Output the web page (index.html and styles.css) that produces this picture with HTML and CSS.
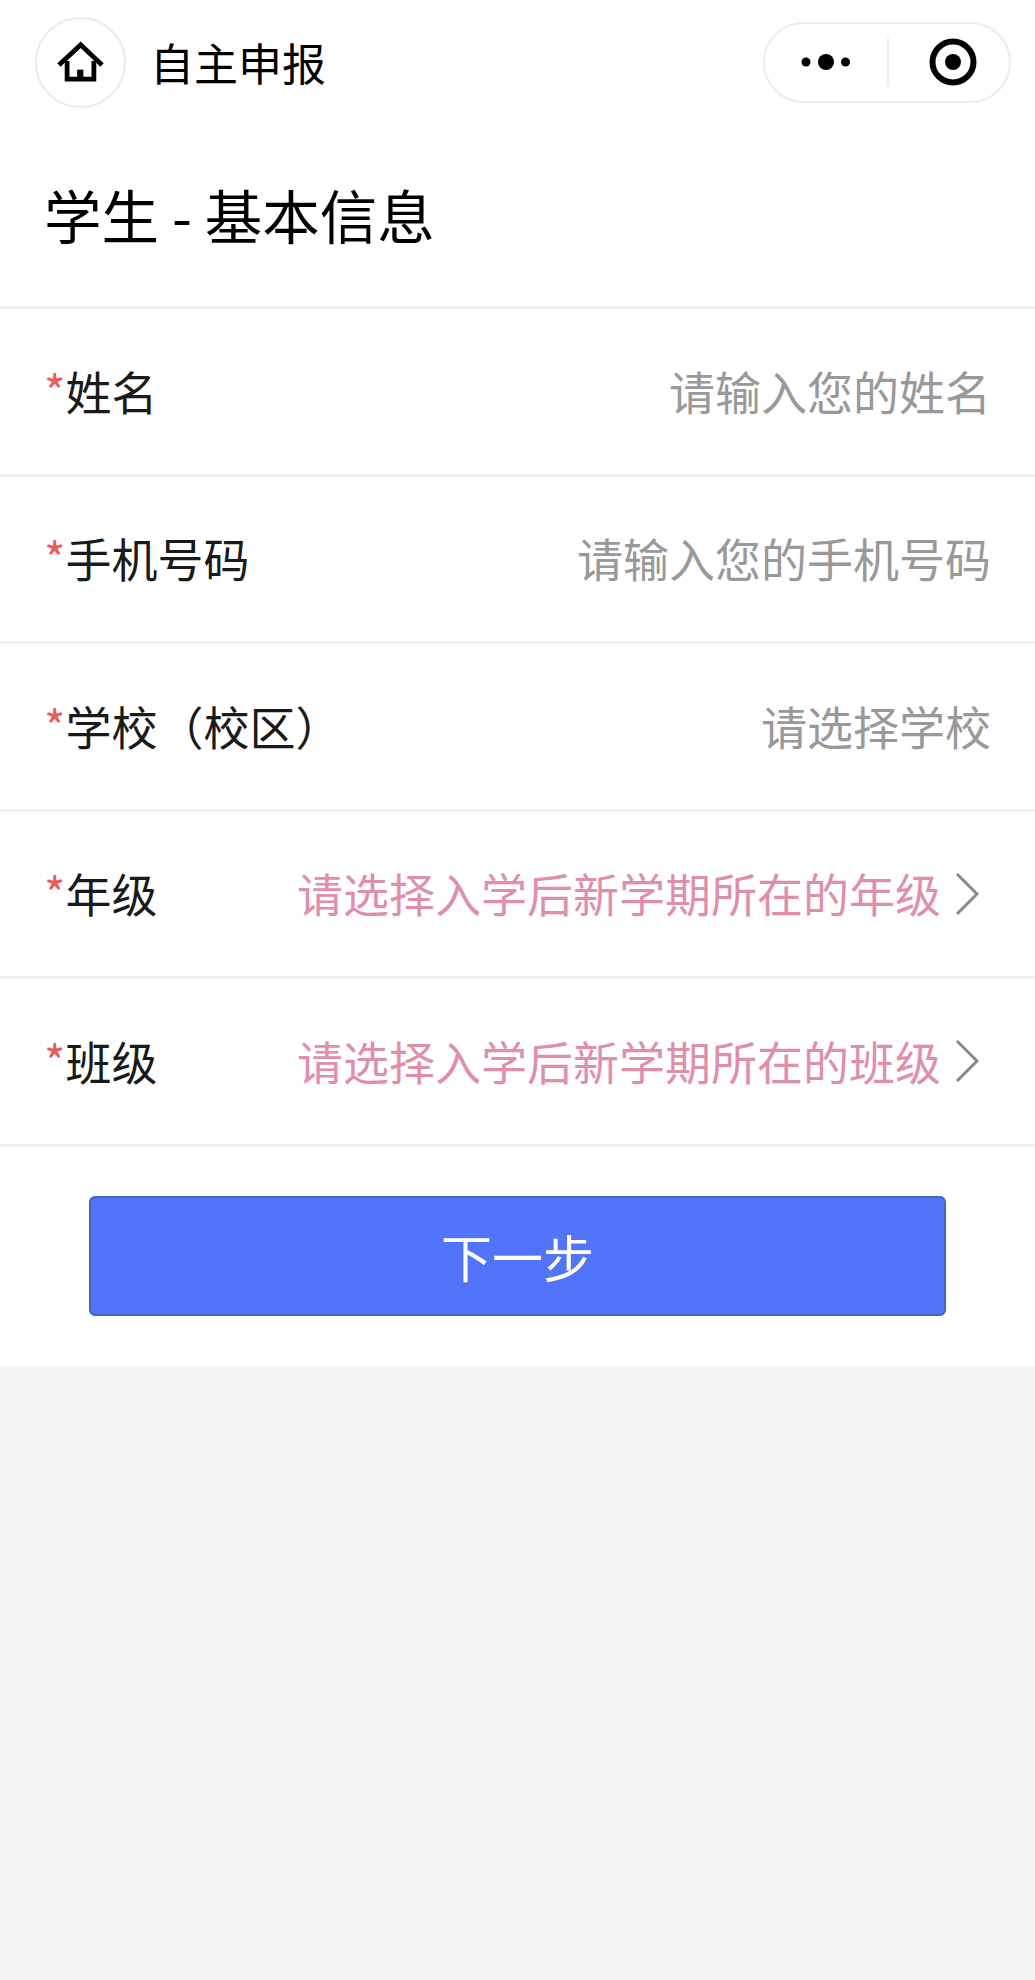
FILE: index.html
```html
<!DOCTYPE html>
<html lang="zh-CN">
<head>
  <meta charset="UTF-8">
  <meta name="viewport" content="width=device-width, initial-scale=1.0">
  <title>自主申报</title>
  <link rel="stylesheet" href="styles.css">
</head>
<body>
  <div class="top">
    <div class="nav">
      <div class="home">
        <svg width="91" height="91" viewBox="0 0 91 91">
          <path d="M23 48 L45.7 27 L68 48" class="roof"/>
          <path d="M31.5 44 V63 H59.5 V44" class="walls"/>
          <rect x="42" y="53" width="6.5" height="11" fill="#000"/>
        </svg>
      </div>
      <div class="nav-title">自主申报</div>
      <div class="capsule">
        <div class="capsule-side capsule-left">
          <svg width="56" height="18" viewBox="0 0 56 18">
            <circle cx="8" cy="9" r="4.5"/>
            <circle cx="28" cy="9" r="8"/>
            <circle cx="47.5" cy="9" r="4.5"/>
          </svg>
        </div>
        <div class="capsule-side capsule-right">
          <svg width="48" height="48" viewBox="0 0 48 48">
            <circle cx="24" cy="24" r="20.5" fill="none" stroke="#000" stroke-width="6"/>
            <circle cx="24" cy="24" r="8"/>
          </svg>
        </div>
      </div>
    </div>

    <h1 class="page-title">学生 - 基本信息</h1>

    <form class="form">
      <div class="row">
        <label class="label"><span class="star">*</span>姓名</label>
        <div class="value">请输入您的姓名</div>
      </div>
      <div class="row">
        <label class="label"><span class="star">*</span>手机号码</label>
        <div class="value">请输入您的手机号码</div>
      </div>
      <div class="row">
        <label class="label"><span class="star">*</span>学校（校区）</label>
        <div class="value">请选择学校</div>
      </div>
      <div class="row">
        <label class="label"><span class="star">*</span>年级</label>
        <div class="value pink">请选择入学后新学期所在的年级</div>
        <svg class="chevron" width="24" height="44" viewBox="0 0 24 44"><path d="M2 2 L22 22 L2 42"/></svg>
      </div>
      <div class="row">
        <label class="label"><span class="star">*</span>班级</label>
        <div class="value pink">请选择入学后新学期所在的班级</div>
        <svg class="chevron" width="24" height="44" viewBox="0 0 24 44"><path d="M2 2 L22 22 L2 42"/></svg>
      </div>
      <div class="actions">
        <button type="button" class="next">下一步</button>
      </div>
    </form>
  </div>
</body>
</html>
```

FILE: styles.css
```css
body {
  margin: 0;
  background-color: #f5f5f5;
  font-family: "Noto Sans CJK SC", "Noto Sans", sans-serif;
  color: #1a1a1a;
}

.top {
  background-color: #fff;
}

.nav {
  display: flex;
  align-items: center;
  height: 124px;
  padding: 0 24px 0 35px;
}

.home {
  width: 91px;
  height: 91px;
  box-sizing: border-box;
  border: 2px solid #ececec;
  border-radius: 50%;
  display: flex;
  align-items: center;
  justify-content: center;
  flex-shrink: 0;
}

.roof, .walls {
  fill: none;
  stroke: #000;
  stroke-width: 5;
}

.nav-title {
  margin-left: 24px;
  font-size: 44px;
  color: #000;
  flex: 1;
}

.capsule {
  width: 248px;
  height: 81px;
  box-sizing: border-box;
  border: 2px solid #ececec;
  border-radius: 41px;
  display: flex;
  align-items: center;
}

.capsule-side {
  display: flex;
  align-items: center;
  justify-content: center;
  height: 48px;
}

.capsule-left {
  width: 122px;
  border-right: 2px solid #ececec;
}

.capsule-right {
  flex: 1;
  padding-left: 7px;
}

.page-title {
  margin: 0;
  height: 185px;
  box-sizing: border-box;
  padding: 45px 0 0 44px;
  font-size: 57.5px;
  font-weight: 400;
  line-height: 90px;
  color: #000;
  border-bottom: 3px solid #f0f0f0;
}

.row {
  display: flex;
  align-items: center;
  height: 167.5px;
  box-sizing: border-box;
  padding: 0 44px;
  border-bottom: 3px solid #f0f0f0;
}

.label {
  font-size: 46px;
  flex: 1;
  padding-bottom: 3px;
}

.star {
  color: #e85c5c;
}

.value {
  font-size: 46px;
  color: #999;
  padding-bottom: 3px;
}

.pink {
  color: #e08fab;
}

.chevron {
  margin-left: 14px;
  margin-right: 12px;
}

.chevron path {
  fill: none;
  stroke: #888;
  stroke-width: 3;
}

.actions {
  padding: 49px 89px 50px;
}

.next {
  display: block;
  width: 100%;
  height: 120px;
  background-color: #5274fb;
  border: 2px solid #4a62c4;
  border-radius: 6px;
  color: #fff;
  font-family: inherit;
  font-size: 51px;
}
```
